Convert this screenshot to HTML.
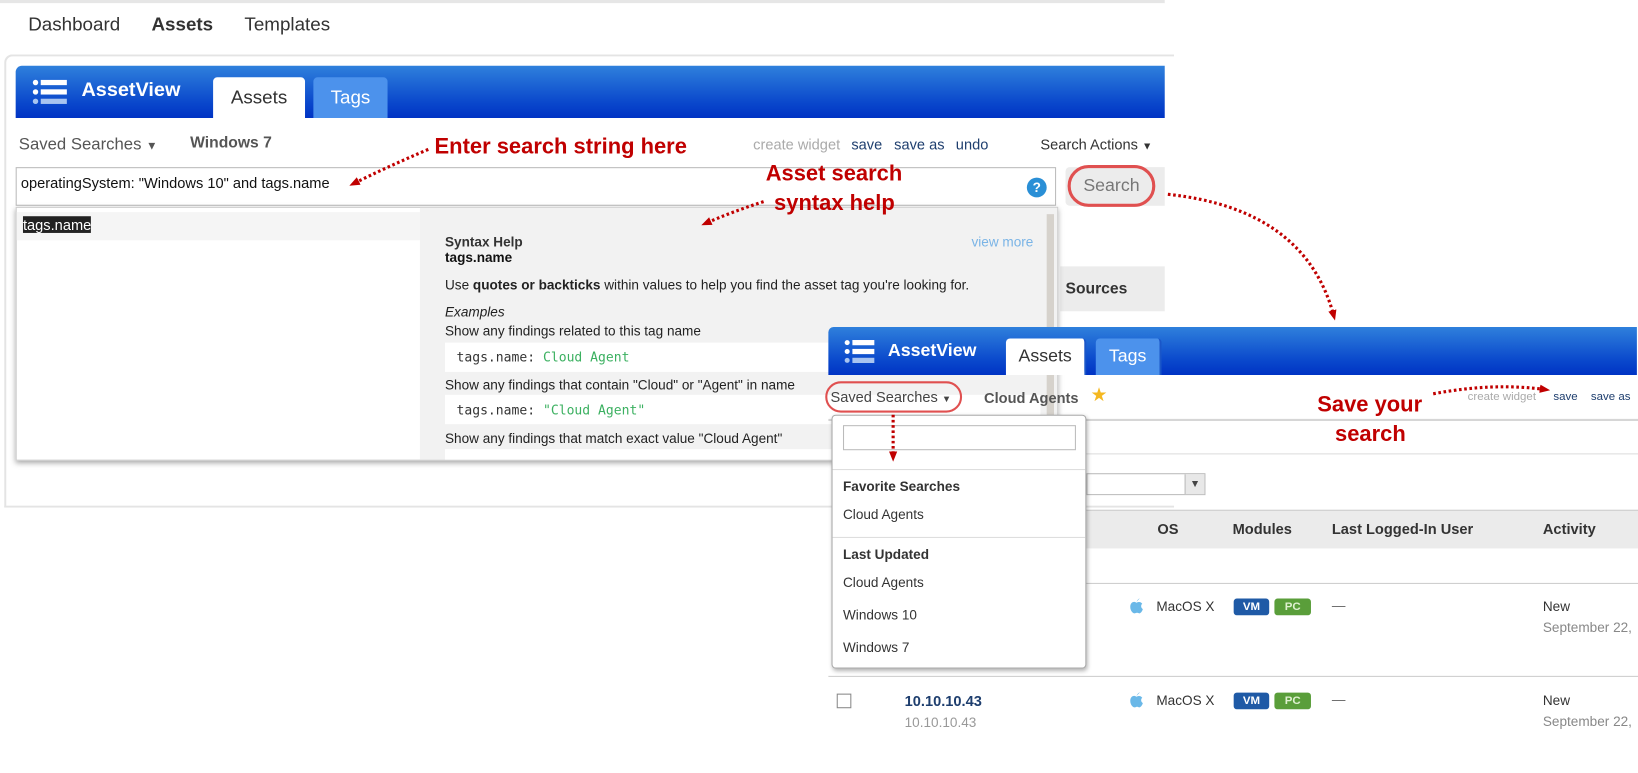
<!DOCTYPE html>
<html><head><meta charset="utf-8">
<style>
*{margin:0;padding:0;box-sizing:border-box}
body{width:1638px;height:740px;background:#fff;position:relative;overflow:hidden;font-family:"Liberation Sans",Arial,sans-serif;color:#333}
#w{position:absolute;left:0;top:0;width:1568px;height:708px;transform:scale(1.0446);transform-origin:0 0}
.a{position:absolute;white-space:nowrap}
.blue{background:linear-gradient(#2f80dc,#0a48cc 70%,#0033c4)}
.tab{position:absolute;border-radius:4px 4px 0 0;text-align:center;font-size:18px}
.red{color:#c00000;font-weight:bold}
.mono{font-family:"DejaVu Sans Mono","Liberation Mono",monospace;font-size:12.5px}
.hd{font-weight:bold;font-size:14px;color:#333}
.vm{position:absolute;width:34px;height:16px;border-radius:3px;background:#1f5aa6;color:#fff;font-size:11px;font-weight:bold;text-align:center;line-height:16px}
.pc{position:absolute;width:35px;height:16px;border-radius:3px;background:#5a9e3a;color:#dff0d0;font-size:11px;font-weight:bold;text-align:center;line-height:16px}
</style></head><body><div id="w">
<div class="a" style="left:0;top:0;width:1115px;height:3px;background:#e6e6e6"></div>
<div class="a" style="left:27px;top:13px;font-size:18px">Dashboard</div>
<div class="a" style="left:145px;top:13px;font-size:18px;font-weight:bold">Assets</div>
<div class="a" style="left:234px;top:13px;font-size:18px">Templates</div>
<div class="a" style="left:4px;top:52px;width:1120px;height:434px;border:2px solid #e4e4e4;border-right:none;border-radius:8px 0 0 0"></div>
<div class="a blue" style="left:15px;top:63px;width:1100px;height:50px;border-radius:6px 0 0 0"></div>
<svg class="a" style="left:31px;top:76px" width="34" height="26"><g fill="#fff"><circle cx="3" cy="3" r="2.6"/><rect x="8" y="0.5" width="25" height="5"/><circle cx="3" cy="12" r="2.6"/><rect x="8" y="9.5" width="25" height="5"/></g><g fill="#a8c4f0"><circle cx="3" cy="21" r="2.6"/><rect x="8" y="18.5" width="25" height="5"/></g></svg>
<div class="a" style="left:78px;top:76px;font-size:19px;font-weight:bold;color:#fff">AssetView</div>
<div class="tab" style="left:204px;top:74px;width:88px;height:39px;background:#fff;line-height:39px;color:#333">Assets</div>
<div class="tab" style="left:300px;top:74px;width:71px;height:39px;background:#4c92ec;line-height:39px;color:#fff">Tags</div>
<div class="a" style="left:18px;top:130px;font-size:16px;color:#555">Saved Searches <span style="font-size:11px">▼</span></div>
<div class="a" style="left:182px;top:128px;font-size:15px;font-weight:bold;color:#555">Windows 7</div>
<div class="a red" style="left:416px;top:129px;font-size:21px">Enter search string here</div>
<div class="a" style="left:721px;top:130px;font-size:14px;color:#aaa">create widget</div>
<div class="a" style="left:815px;top:130px;font-size:14px;color:#1e3e6e">save</div>
<div class="a" style="left:856px;top:130px;font-size:14px;color:#1e3e6e">save as</div>
<div class="a" style="left:915px;top:130px;font-size:14px;color:#1e3e6e">undo</div>
<div class="a" style="left:996px;top:130px;font-size:14px;color:#333">Search Actions <span style="font-size:10px">▼</span></div>
<div class="a" style="left:15px;top:160px;width:996px;height:37px;border:1px solid #bbb;background:#fff"></div>
<div class="a" style="left:20px;top:167px;font-size:14px;color:#111">operatingSystem: "Windows 10" and tags.name</div>
<div class="a" style="left:983px;top:170px;width:19px;height:19px;border-radius:50%;background:#2a8fd6;color:#fff;font-size:13px;font-weight:bold;text-align:center;line-height:19px">?</div>
<div class="a" style="left:1020px;top:160px;width:95px;height:37px;background:#ececec;border-radius:4px 0 0 4px"></div>
<div class="a" style="left:1022px;top:158px;width:84px;height:40px;border:3px solid #e05050;border-radius:20px;font-size:17px;color:#777;text-align:center;line-height:34px">Search</div>
<div class="a" style="left:1015px;top:255px;width:100px;height:43px;background:#ececec;font-size:15px;font-weight:bold;line-height:43px;padding-left:5px">Sources</div>
<div class="a" style="left:15px;top:198px;width:998px;height:243px;background:#fff;box-shadow:0 2px 5px rgba(0,0,0,.35);border:1px solid #ccc"></div>
<div class="a" style="left:16px;top:203px;width:386px;height:27px;background:#f5f5f5"></div>
<div class="a" style="left:22px;top:207px;font-size:14px;background:#222;color:#fff">tags.name</div>
<div class="a" style="left:402px;top:199px;width:610px;height:241px;background:#f2f2f2"></div>
<div class="a" style="left:1002px;top:205px;width:7px;height:235px;background:#d6d2cc"></div>
<div class="a" style="left:426px;top:224px;font-size:13px;font-weight:bold;color:#333">Syntax Help</div>
<div class="a" style="left:426px;top:239px;font-size:13px;font-weight:bold;color:#111">tags.name</div>
<div class="a" style="left:930px;top:224px;font-size:13px;color:#7ab4e6">view more</div>
<div class="a" style="left:426px;top:265px;font-size:13px;color:#222">Use <b>quotes or backticks</b> within values to help you find the asset tag you're looking for.</div>
<div class="a" style="left:426px;top:291px;font-size:13px;font-style:italic;color:#222">Examples</div>
<div class="a" style="left:426px;top:309px;font-size:13px;color:#222">Show any findings related to this tag name</div>
<div class="a" style="left:426px;top:328px;width:570px;height:28px;background:#fff"></div>
<div class="a mono" style="left:437px;top:334px">tags.name: <span style="color:#3bb060">Cloud Agent</span></div>
<div class="a" style="left:426px;top:361px;font-size:13px;color:#222">Show any findings that contain "Cloud" or "Agent" in name</div>
<div class="a" style="left:426px;top:378px;width:570px;height:28px;background:#fff"></div>
<div class="a mono" style="left:437px;top:385px">tags.name: <span style="color:#3bb060">"Cloud Agent"</span></div>
<div class="a" style="left:426px;top:412px;font-size:13px;color:#222">Show any findings that match exact value "Cloud Agent"</div>
<div class="a" style="left:426px;top:430px;width:570px;height:10px;background:#fff"></div>
<div class="a red" style="left:733px;top:155px;font-size:21px">Asset search</div>
<div class="a red" style="left:741px;top:183px;font-size:21px">syntax help</div>

<div class="a blue" style="left:793px;top:313px;width:774px;height:46px;border-radius:5px 0 0 0"></div>
<svg class="a" style="left:808px;top:325px" width="30" height="24"><g fill="#fff"><circle cx="3" cy="3" r="2.4"/><rect x="8" y="0.5" width="21" height="5"/><circle cx="3" cy="11.5" r="2.4"/><rect x="8" y="9" width="21" height="5"/></g><g fill="#a8c4f0"><circle cx="3" cy="20" r="2.4"/><rect x="8" y="17.5" width="21" height="5"/></g></svg>
<div class="a" style="left:850px;top:326px;font-size:17px;font-weight:bold;color:#fff">AssetView</div>
<div class="tab" style="left:963px;top:324px;width:77px;height:35px;background:#fff;line-height:34px;font-size:17px;border-right:2px solid #1a56c8">Assets</div>
<div class="tab" style="left:1049px;top:324px;width:63px;height:35px;background:#4c92ec;line-height:34px;font-size:17px;color:#fff;border-right:2px solid #1a56c8">Tags</div>
<div class="a" style="left:795px;top:372px;font-size:14px;color:#444">Saved Searches <span style="font-size:9px">▼</span></div>
<div class="a" style="left:790px;top:365px;width:131px;height:30px;border:2.5px solid #e05050;border-radius:15px"></div>
<div class="a" style="left:942px;top:373px;font-size:14px;font-weight:bold;color:#555">Cloud Agents</div>
<div class="a" style="left:1044px;top:368px;font-size:18px;color:#f5b820">★</div>
<div class="a" style="left:1405px;top:374px;font-size:11px;color:#aaa">create widget</div>
<div class="a" style="left:1487px;top:374px;font-size:11px;color:#1e3e6e">save</div>
<div class="a" style="left:1523px;top:374px;font-size:11px;color:#1e3e6e">save as</div>
<div class="a" style="left:793px;top:401px;width:845px;height:2px;background:#d6d6d6"></div>
<div class="a" style="left:1040px;top:434px;width:598px;height:1px;background:#ddd"></div>
<div class="a" style="left:1040px;top:453px;width:114px;height:21px;border:1px solid #bbb"></div>
<div class="a" style="left:1134px;top:454px;width:19px;height:19px;background:#e8e8e8;border-left:1px solid #bbb;font-size:10px;text-align:center;line-height:19px;color:#444">▼</div>
<div class="a" style="left:1040px;top:488px;width:598px;height:37px;background:#ebebeb;border-top:1px solid #ccc"></div>
<div class="a hd" style="left:1108px;top:498px">OS</div>
<div class="a hd" style="left:1180px;top:498px">Modules</div>
<div class="a hd" style="left:1275px;top:498px">Last Logged-In User</div>
<div class="a hd" style="left:1477px;top:498px">Activity</div>
<div class="a" style="left:1040px;top:558px;width:598px;height:1px;background:#ccc"></div>
<div class="a" style="left:793px;top:647px;width:845px;height:1px;background:#ccc"></div>
<svg class="a" style="left:1081px;top:572px" width="14" height="16"><path d="M7,4 C9,0 11,1 10,1 C9,2 8,3 7,4Z" fill="#6ab8e8"/><path d="M7,5 C4,3 1,5 1,9 C1,13 4,16 6,15 C7,14.5 8,14.5 9,15 C11,16 13,12 13,11 C11,10 11,7 12.5,6 C11,4 9,4 7,5Z" fill="#6ab8e8"/></svg>
<div class="a" style="left:1107px;top:573px;font-size:13px">MacOS X</div>
<div class="vm" style="left:1181px;top:573px">VM</div><div class="pc" style="left:1220px;top:573px">PC</div>
<div class="a" style="left:1275px;top:572px;font-size:13px;color:#666">—</div>
<div class="a" style="left:1477px;top:573px;font-size:13px">New</div>
<div class="a" style="left:1477px;top:593px;font-size:13px;color:#888">September 22,</div>
<div class="a" style="left:801px;top:664px;width:14px;height:14px;border:1.5px solid #888"></div>
<div class="a" style="left:866px;top:663px;font-size:14px;font-weight:bold;color:#1e3e6e">10.10.10.43</div>
<div class="a" style="left:866px;top:684px;font-size:13px;color:#999">10.10.10.43</div>
<svg class="a" style="left:1081px;top:662px" width="14" height="16"><path d="M7,4 C9,0 11,1 10,1 C9,2 8,3 7,4Z" fill="#6ab8e8"/><path d="M7,5 C4,3 1,5 1,9 C1,13 4,16 6,15 C7,14.5 8,14.5 9,15 C11,16 13,12 13,11 C11,10 11,7 12.5,6 C11,4 9,4 7,5Z" fill="#6ab8e8"/></svg>
<div class="a" style="left:1107px;top:663px;font-size:13px">MacOS X</div>
<div class="vm" style="left:1181px;top:663px">VM</div><div class="pc" style="left:1220px;top:663px">PC</div>
<div class="a" style="left:1275px;top:662px;font-size:13px;color:#666">—</div>
<div class="a" style="left:1477px;top:663px;font-size:13px">New</div>
<div class="a" style="left:1477px;top:683px;font-size:13px;color:#888">September 22,</div>
<div class="a" style="left:796px;top:397px;width:244px;height:243px;background:#fff;border:1px solid #aaa;border-radius:4px;box-shadow:1px 2px 4px rgba(0,0,0,.3)"></div>
<div class="a" style="left:807px;top:407px;width:223px;height:24px;border:1px solid #bbb"></div>
<div class="a" style="left:797px;top:449px;width:242px;height:1px;background:#ddd"></div>
<div class="a" style="left:807px;top:458px;font-size:13px;font-weight:bold">Favorite Searches</div>
<div class="a" style="left:807px;top:485px;font-size:13px">Cloud Agents</div>
<div class="a" style="left:797px;top:514px;width:242px;height:1px;background:#ddd"></div>
<div class="a" style="left:807px;top:523px;font-size:13px;font-weight:bold">Last Updated</div>
<div class="a" style="left:807px;top:550px;font-size:13px">Cloud Agents</div>
<div class="a" style="left:807px;top:581px;font-size:13px">Windows 10</div>
<div class="a" style="left:807px;top:612px;font-size:13px">Windows 7</div>
<div class="a red" style="left:1261px;top:376px;font-size:21px">Save your</div>
<div class="a red" style="left:1278px;top:404px;font-size:21px">search</div>
<svg class="a" style="left:0;top:0" width="1638" height="740">
<defs><marker id="ah" markerUnits="userSpaceOnUse" markerWidth="10" markerHeight="10" refX="6" refY="5" orient="auto"><path d="M0,1L10,5L0,9z" fill="#c00000"/></marker></defs>
<g fill="none" stroke="#c00000" stroke-width="3" stroke-dasharray="2.5 2.5" marker-end="url(#ah)">
<path d="M410,143 Q370,160 338,176"/>
<path d="M731,193 Q700,203 675,214"/>
<path d="M1118,186 Q1250,200 1277,303"/>
<path d="M855,397 L855,438"/>
<path d="M1372,377 Q1430,366 1480,373"/>
</g></svg>
</div></body></html>
